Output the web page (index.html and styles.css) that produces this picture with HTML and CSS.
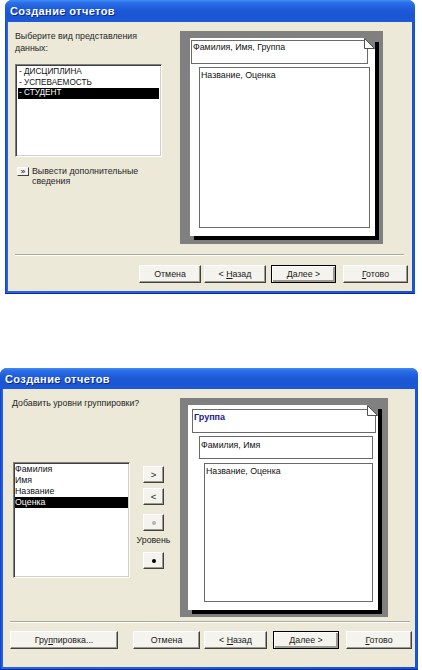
FILE: index.html
```html
<!DOCTYPE html>
<html lang="ru">
<head>
<meta charset="utf-8">
<title>Создание отчетов</title>
<link rel="stylesheet" href="styles.css">
</head>
<body>
<div class="win win1">
  <div class="titlebar"><span class="title">Создание отчетов</span></div>
  <div class="client">
    <div class="main main1">
      <div class="left1">
        <div class="prompt">Выберите вид представления<br>данных:</div>
        <div class="listbox lb1">
          <div class="item">- ДИСЦИПЛИНА</div>
          <div class="item">- УСПЕВАЕМОСТЬ</div>
          <div class="item sel">- СТУДЕНТ</div>
        </div>
        <div class="more"><span class="morebtn">»</span><span class="moretext">Вывести дополнительные<br>сведения</span></div>
      </div>
      <div class="preview pv1">
        <div class="page page1">
          <div class="box hdr1">Фамилия, Имя, Группа</div>
          <div class="box body1">Название, Оценка</div>
          <svg class="fold" width="11" height="11" viewBox="0 0 11 11"><polygon points="0,0 11,0 11,11" fill="#808080"/><polygon points="0.5,0.5 0.5,10.5 10.5,10.5" fill="#fff" stroke="#505050" stroke-width="1"/></svg>
        </div>
      </div>
    </div>
    <div class="divider div1"></div>
    <div class="buttons buttons1">
      <button class="btn b-cancel1"><span>Отмена</span></button>
      <button class="btn b-back1"><span>&lt; <u>Н</u>азад</span></button>
      <button class="btn def b-next1"><span><u>Д</u>алее &gt;</span></button>
      <button class="btn b-done1"><span><u>Г</u>отово</span></button>
    </div>
  </div>
</div>

<div class="win win2">
  <div class="titlebar"><span class="title">Создание отчетов</span></div>
  <div class="client">
    <div class="main main2">
      <div class="left2">
        <div class="prompt prompt2">Добавить уровни группировки?</div>
        <div class="row2">
          <div class="listbox lb2">
            <div class="item">Фамилия</div>
            <div class="item">Имя</div>
            <div class="item">Название</div>
            <div class="item sel">Оценка</div>
          </div>
          <div class="btncol">
            <button class="btn sbtn"><span>&gt;</span></button>
            <button class="btn sbtn"><span>&lt;</span></button>
            <button class="btn sbtn gap9"><span class="dot grey"></span></button>
            <div class="lvl">Уровень</div>
            <button class="btn sbtn"><span class="dot"></span></button>
          </div>
        </div>
      </div>
      <div class="preview pv2">
        <div class="page page2">
          <div class="box hdr2">Группа</div>
          <div class="box sub2">Фамилия, Имя</div>
          <div class="box body2">Название, Оценка</div>
          <svg class="fold" width="11" height="11" viewBox="0 0 11 11"><polygon points="0,0 11,0 11,11" fill="#808080"/><polygon points="0.5,0.5 0.5,10.5 10.5,10.5" fill="#fff" stroke="#505050" stroke-width="1"/></svg>
        </div>
      </div>
    </div>
    <div class="divider div2"></div>
    <div class="buttons buttons2">
      <button class="btn b-group"><span>Гру<u>п</u>пировка...</span></button>
      <span class="spacer"></span>
      <button class="btn b-cancel2"><span>Отмена</span></button>
      <button class="btn b-back2"><span>&lt; <u>Н</u>азад</span></button>
      <button class="btn def b-next2"><span><u>Д</u>алее &gt;</span></button>
      <button class="btn b-done2"><span><u>Г</u>отово</span></button>
    </div>
  </div>
</div>
</body>
</html>
```

FILE: styles.css
```css
* { box-sizing: border-box; margin: 0; padding: 0; }
html, body { background: #fff; }
body {
  margin: 0;
  width: 422px;
  height: 670px;
  overflow: hidden;
  font-family: "Liberation Sans", Arial, sans-serif;
  font-size: 8.8px;
  color: #1a1a1a;
}

/* window frame */
.win {
  display: flex;
  flex-direction: column;
  background: linear-gradient(90deg, #0a3ccc 0, #2a62e0 2px, #1a52d6 100%);
  border-radius: 7px 7px 0 0;
  box-shadow: inset 0 -1px 0 #0a2aa0;
}
.win1 { margin-left: 5px; width: 410px; height: 294px; }
.win2 { margin-top: 74px; width: 418px; height: 302px; }

.titlebar {
  height: 22px;
  border-radius: 7px 7px 0 0;
  background: linear-gradient(180deg, #3f8cf3 0, #2a6ee8 3px, #1d5bd8 9px, #1a55d3 16px, #1d5ad6 22px);
  display: flex;
  align-items: center;
  padding-left: 5px;
  color: #fff;
  font-family: "Liberation Sans", Arial, sans-serif;
  font-weight: bold;
  font-size: 11px;
  letter-spacing: 0.4px;
  text-shadow: 1px 1px 0 #0a2a8a;
}
.win2 .titlebar { height: 21px; }

.client {
  flex: 1;
  margin: 0 3px 3px;
  background: #ECE9D8;
  display: flex;
  flex-direction: column;
}

.main { display: flex; align-items: flex-start; }

/* prompts and lists */
.prompt { line-height: 11.5px; color: #262626; }
.listbox {
  background: #fff;
  border: 1px solid;
  border-color: #7f7f7f #fff #fff #7f7f7f;
  box-shadow: inset 1px 1px 0 #404040, inset -1px -1px 0 #d4d0c8;
  padding: 2px 2px;
}
.item { line-height: 10.5px; padding-left: 1px; white-space: nowrap; color: #111; }
.item.sel { background: #000; color: #fff; }

/* dialog 1 */
.main1 { margin-top: 9px; height: 213px; }
.left1 { margin-left: 7px; width: 147px; }
.lb1 { margin-top: 10px; height: 93px; font-size: 8.2px; }
.lb1 .item { line-height: 10.5px; }
.more { display: flex; margin-top: 9px; line-height: 10px; color: #262626; }
.morebtn {
  margin-left: 2px;
  margin-top: 1px;
  width: 12px;
  height: 9px;
  font-size: 8px;
  line-height: 7px;
  text-align: center;
  background: #f3f2ec;
  border: 1px solid;
  border-color: #fff #404040 #404040 #fff;
  color: #000;
}
.moretext { margin-left: 3px; }

.preview { background: #808080; }
.page {
  position: relative;
  background: #fff;
  box-shadow: 4px 4px 0 #000;
}
.fold { position: absolute; top: 0; right: 0; display: block; }
.box {
  border: 1px solid #6a6a6a;
  background: #fff;
  line-height: 11px;
  padding: 1px 1px;
  white-space: nowrap;
  color: #111;
}

.pv1 { margin-left: 18px; width: 203px; height: 213px; padding: 7px 0 0 10px; }
.page1 { width: 185px; height: 198px; padding-top: 2px; }
.hdr1 { margin-left: 1px; width: 177px; height: 24px; }
.body1 { margin: 3px 0 0 9px; width: 171px; height: 161px; padding-top: 2px; }

.divider {
  height: 2px;
  border-top: 1px solid #aca899;
  border-bottom: 1px solid #fff;
}
.div1 { margin: 10px 8px 0 7px; }

.buttons { display: flex; align-items: center; height: 18px; }
.buttons1 { margin-top: 9px; justify-content: flex-end; padding-right: 4px; }

.btn {
  height: 18px;
  font-family: "Liberation Sans", Arial, sans-serif;
  font-size: 8.8px;
  color: #1a1a1a;
  background: #f4f3ee;
  border: 1px solid;
  border-color: #fff #404040 #404040 #fff;
  box-shadow: inset -1px -1px 0 #9d9a8d;
  display: flex;
  align-items: center;
  justify-content: center;
  white-space: pre;
}
.btn.def {
  border: 1px solid #000;
  box-shadow: inset 1px 1px 0 #fff, inset -2px -2px 0 #9d9a8d;
}
.b-cancel1 { width: 62px; }
.b-back1 { width: 62px; margin-left: 3px; }
.b-next1 { width: 65px; margin-left: 5px; }
.b-done1 { width: 65px; margin-left: 7px; }

/* dialog 2 */
.main2 { height: 228px; }
.left2 { margin-left: 9px; margin-top: 8px; }
.prompt2 { line-height: 12px; }
.row2 { display: flex; margin-top: 53px; }
.lb2 { margin-left: 1px; width: 117px; height: 116px; padding: 1px 1px; }
.lb2 .item { line-height: 11px; padding-left: 0; }
.btncol {
  margin-left: 13px;
  width: 21px;
  padding-top: 4px;
  display: flex;
  flex-direction: column;
  align-items: center;
}
.sbtn { width: 21px; height: 17px; margin-bottom: 5px; font-size: 9.5px; }
.sbtn.gap9 { margin-top: 4px; margin-bottom: 0; }
.lvl { margin: 3px 0 6px; line-height: 12px; white-space: nowrap; color: #262626; }
.dot { width: 4px; height: 4px; border-radius: 50%; background: #000; display: block; }
.dot.grey { background: #b5b3a8; }

.pv2 { margin-left: 16px; margin-top: 9px; width: 208px; height: 219px; padding: 7px 0 0 8px; }
.page2 { width: 190px; height: 205px; padding-top: 4px; }
.hdr2 {
  margin-left: 4px;
  width: 184px;
  height: 24px;
  font-weight: bold;
  color: #1a1a8c;
  padding-top: 2px;
  font-size: 9px;
}
.sub2 { margin: 3px 0 0 11px; width: 174px; height: 23px; padding-top: 3px; }
.body2 { margin: 4px 0 0 16px; width: 169px; height: 139px; padding-top: 2px; }

.div2 { margin: 4px 5px 0 7px; }
.buttons2 { margin-top: 8px; padding-right: 3px; }
.b-group { width: 108px; margin-left: 7px; }
.spacer { flex: 1; }
.b-cancel2 { width: 67px; }
.b-back2 { width: 63px; margin-left: 4px; }
.b-next2 { width: 66px; margin-left: 6px; }
.b-done2 { width: 66px; margin-left: 7px; }
```
